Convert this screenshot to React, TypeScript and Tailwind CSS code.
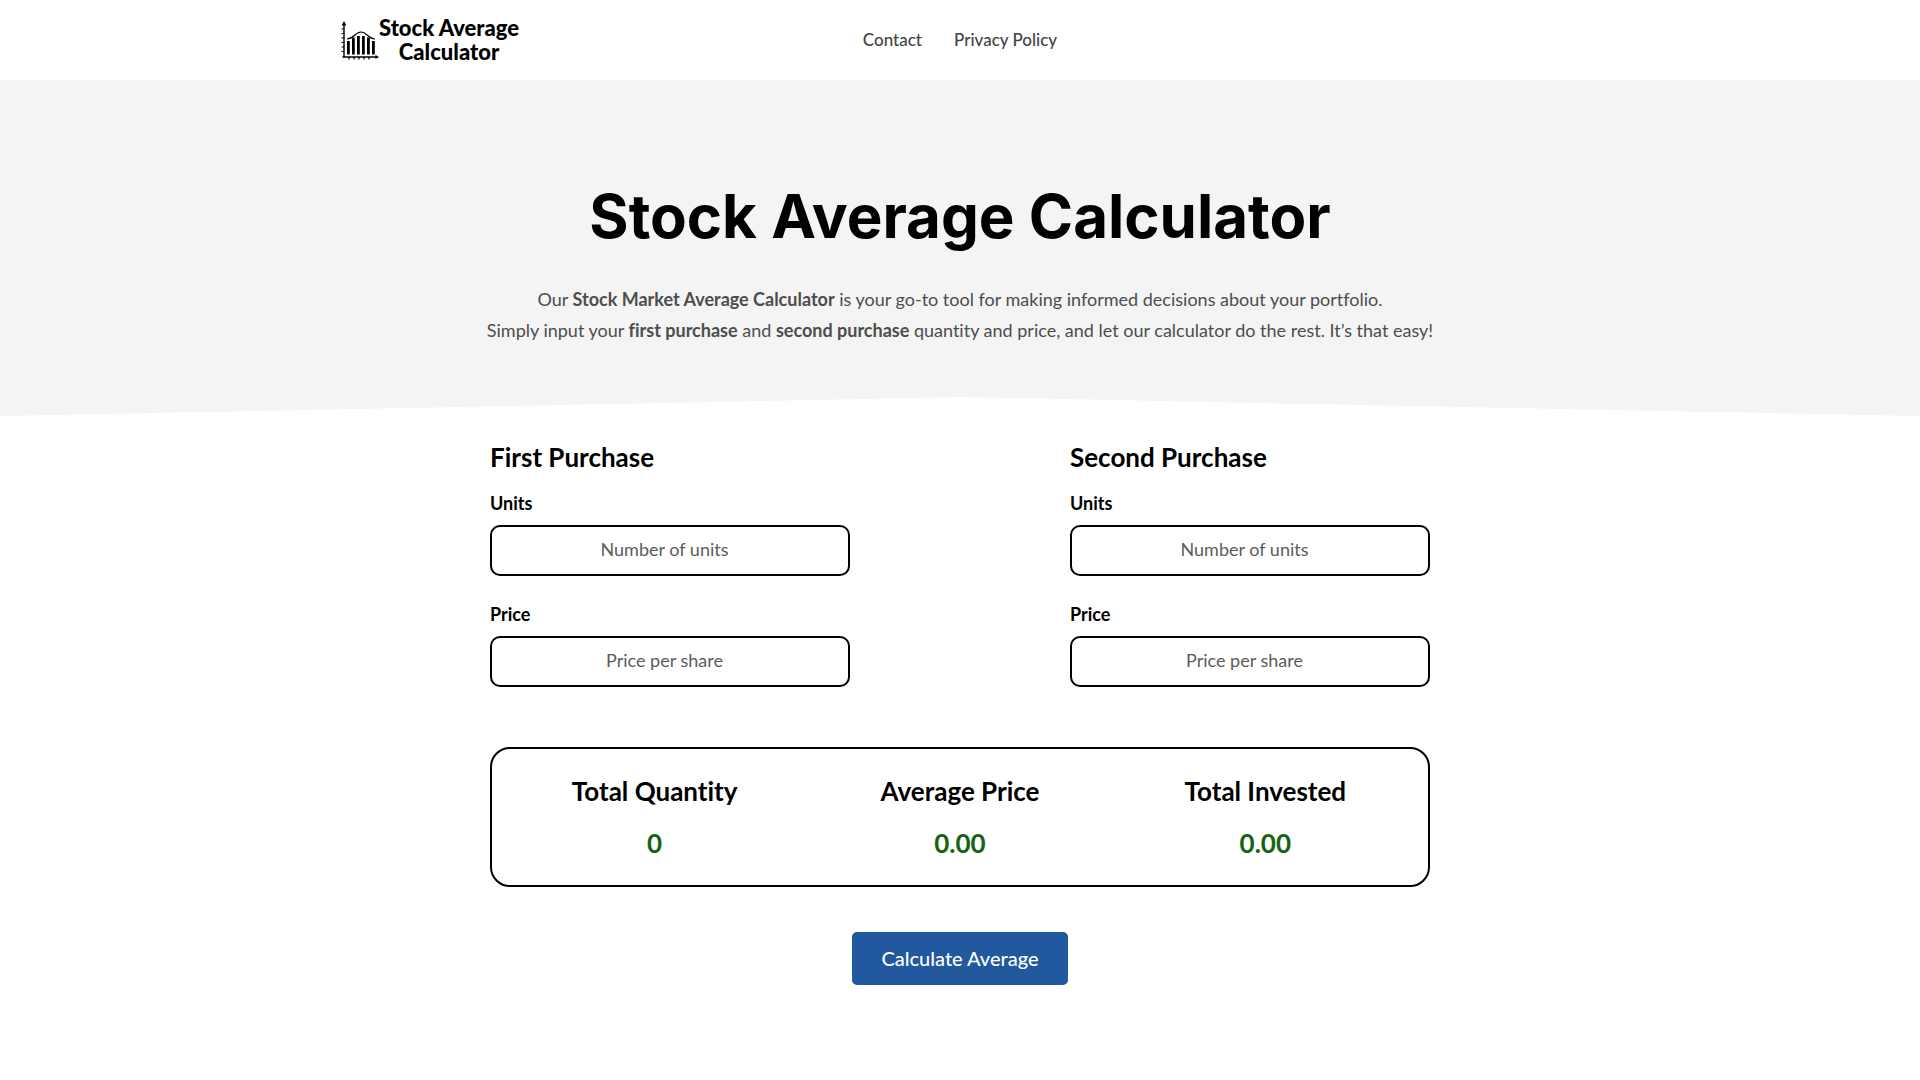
import React, { useState } from 'react';

interface Purchase {
    units: string;
    price: string;
}

interface Totals {
    quantity: number;
    average: number;
    invested: number;
}

interface PurchaseFormProps {
    id: string;
    title: string;
    value: Purchase;
    onChange: (value: Purchase) => void;
}

const EMPTY: Purchase = { units: '', price: '' };

const BARS = [
    { x: 7, y: 21 },
    { x: 12, y: 17.5 },
    { x: 17, y: 16 },
    { x: 22, y: 16 },
    { x: 27, y: 17.5 },
    { x: 32, y: 21 },
];

const LogoIcon = () => (
    <svg className="h-10 w-[39px]" viewBox="0 0 39 40" fill="none" stroke="#000" aria-hidden="true">
        <path d="M4 4v33.500M2.500 37H36" strokeWidth="1.4" />
        <path d="M4 1l2.300 4.500H1.700zM39 37l-3.500-2v4z" fill="#000" stroke="none" />
        <path d="M1.500 9H4M1.500 13.500H4M1.500 18H4M1.500 22.500H4M1.500 27H4M1.500 31.500H4" strokeWidth="1.200" />
        <path d="M9 37v2.500M14 37v2.500M19 37v2.500M24 37v2.500M29 37v2.500" strokeWidth="1.200" />
        <path d="M7 19c7 0 8-7 14-7s7 7 14 7" strokeWidth="1.200" />
        {BARS.map(bar => (
            <rect key={bar.x} x={bar.x} y={bar.y} width="2.800" height={34.5 - bar.y} fill="#000" stroke="none" />
        ))}
    </svg>
);

const PurchaseForm: React.FC<PurchaseFormProps> = ({ id, title, value, onChange }) => {
    const label = 'mb-2 block text-lg leading-7 font-bold text-black';
    const input = 'block h-[51px] w-full rounded-[10px] border-2 border-black bg-white pb-1 pl-1 text-center text-lg text-[#4d4d4d] placeholder-[#5c5c5c] focus:outline-none focus:ring-2 focus:ring-[#21589e]';

    return (
        <div className="w-full sm:w-[360px]">
            <h2 className="mb-4 text-[26px] leading-8 font-bold text-black">{title}</h2>
            <label htmlFor={`${id}-units`} className={label}>Units</label>
            <input
                id={`${id}-units`}
                type="number"
                className={input}
                placeholder="Number of units"
                value={value.units}
                onChange={e => onChange({ ...value, units: e.target.value })}
            />
            <div className="mt-6">
                <label htmlFor={`${id}-price`} className={label}>Price</label>
                <input
                    id={`${id}-price`}
                    type="number"
                    className={input}
                    placeholder="Price per share"
                    value={value.price}
                    onChange={e => onChange({ ...value, price: e.target.value })}
                />
            </div>
        </div>
    );
};

const App: React.FC = () => {
    const [first, setFirst] = useState<Purchase>(EMPTY);
    const [second, setSecond] = useState<Purchase>(EMPTY);
    const [totals, setTotals] = useState<Totals>({ quantity: 0, average: 0, invested: 0 });

    const calculate = () => {
        const quantity = Number(first.units) + Number(second.units);
        const invested = Number(first.units) * Number(first.price) + Number(second.units) * Number(second.price);
        setTotals({ quantity, invested, average: quantity > 0 ? invested / quantity : 0 });
    };

    const results = [
        { label: 'Total Quantity', value: String(totals.quantity) },
        { label: 'Average Price', value: totals.average.toFixed(2) },
        { label: 'Total Invested', value: totals.invested.toFixed(2) },
    ];

    return (
        <div className="min-h-screen bg-white font-[Lato,sans-serif] text-[#4d4d4d] [font-variant-ligatures:none]">
            {/* Header */}
            <header className="mx-auto grid h-20 max-w-[1240px] grid-cols-[1fr_auto_1fr] items-center">
                <a href="#" className="flex items-center text-black">
                    <LogoIcon />
                    <span className="text-center text-[22px] leading-6 font-black">
                        Stock Average<br />Calculator
                    </span>
                </a>
                <nav className="flex gap-8 text-[17px] font-medium text-[#444]">
                    <a href="#contact" className="hover:text-black">Contact</a>
                    <a href="#privacy" className="hover:text-black">Privacy Policy</a>
                </nav>
            </header>

            {/* Hero */}
            <section className="bg-[#f4f4f4] text-center">
                <div className="px-4 pt-24 pb-[51px]">
                    <h1 className="font-[Inter,sans-serif] text-6xl leading-20 font-bold text-black">Stock Average Calculator</h1>
                    <p className="mt-7 text-lg leading-[31px]">
                        Our <strong>Stock Market Average Calculator</strong> is your go-to tool for making informed decisions about your portfolio.
                        <br />
                        Simply input your <strong>first purchase</strong> and <strong>second purchase</strong> quantity and price, and let our calculator do the rest. It’s that easy!
                    </p>
                </div>
                <svg className="block h-[19px] w-full" viewBox="0 0 100 10" preserveAspectRatio="none" aria-hidden="true">
                    <path d="M0 10L50 0l50 10z" fill="#fff" />
                </svg>
            </section>

            {/* Calculator */}
            <main className="mx-auto max-w-[940px] pt-[25px] pb-24">
                <div className="flex flex-wrap justify-between gap-8">
                    <PurchaseForm id="first" title="First Purchase" value={first} onChange={setFirst} />
                    <PurchaseForm id="second" title="Second Purchase" value={second} onChange={setSecond} />
                </div>

                <div className="mt-15 grid grid-cols-3 rounded-[20px] border-2 border-black px-2.5 py-6 text-center text-[26px] leading-9 font-bold">
                    {results.map(result => (
                        <div key={result.label}>
                            <h3 className="text-black">{result.label}</h3>
                            <p className="mt-4 text-[#146414]">{result.value}</p>
                        </div>
                    ))}
                </div>

                <div className="mt-[45px] flex justify-center">
                    <button
                        onClick={calculate}
                        className="h-[53px] w-[216px] rounded-[5px] bg-[#21589e] pb-0.5 text-xl font-medium text-white hover:bg-[#1a4780]"
                    >
                        Calculate Average
                    </button>
                </div>
            </main>
        </div>
    );
};

export default App;
